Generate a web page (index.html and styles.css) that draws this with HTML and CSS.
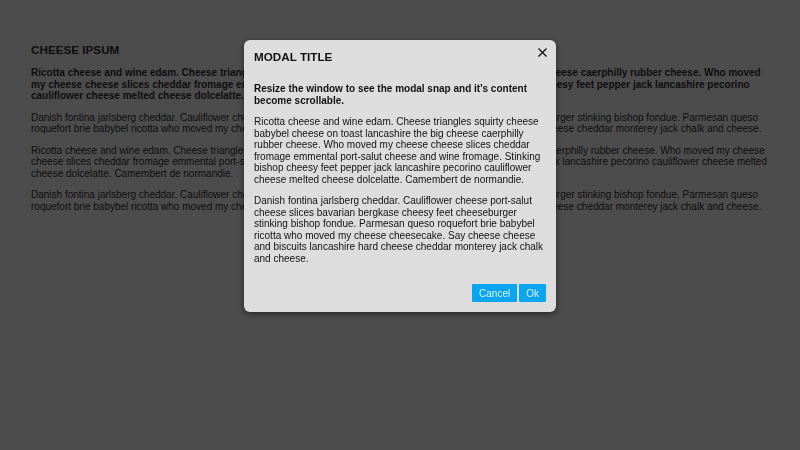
FILE: index.html
```html
<!DOCTYPE html>
<html lang="en">
  <head>
    <meta charset="UTF-8" />
    <meta name="viewport" content="width=device-width, initial-scale=1.0" />
    <title>Modal</title>
    <link rel="stylesheet" href="styles.css">
  </head>
  <body>
    <div class="page">
      <h3>CHEESE IPSUM</h3>
      <p class="lead">
        Ricotta cheese and wine edam. Cheese triangles squirty cheese babybel cheese on toast lancashire the big cheese caerphilly rubber cheese. Who moved my cheese cheese slices cheddar fromage emmental port-salut cheese and wine fromage. Stinking bishop cheesy feet pepper jack lancashire pecorino cauliflower cheese melted cheese dolcelatte.
      </p>
      <p>
        Danish fontina jarlsberg cheddar. Cauliflower cheese port-salut cheese slices bavarian bergkase cheesy feet cheeseburger stinking bishop fondue. Parmesan queso roquefort brie babybel ricotta who moved my cheese cheesecake. Say cheese cheese and biscuits lancashire hard cheese cheddar monterey jack chalk and cheese.
      </p>
      <p>
        Ricotta cheese and wine edam. Cheese triangles squirty cheese babybel cheese on toast lancashire the big cheese caerphilly rubber cheese. Who moved my cheese cheese slices cheddar fromage emmental port-salut cheese and wine fromage. Stinking bishop cheesy feet pepper jack lancashire pecorino cauliflower cheese melted cheese dolcelatte. Camembert de normandie.
      </p>
      <p>
        Danish fontina jarlsberg cheddar. Cauliflower cheese port-salut cheese slices bavarian bergkase cheesy feet cheeseburger stinking bishop fondue. Parmesan queso roquefort brie babybel ricotta who moved my cheese cheesecake. Say cheese cheese and biscuits lancashire hard cheese cheddar monterey jack chalk and cheese.
      </p>
    </div>

    <div class="overlay">
      <div class="modal">
        <div class="modal-header">
          <h3>MODAL TITLE</h3>
          <button class="close" aria-label="Close">
            <svg width="9" height="9" viewBox="0 0 9 9">
              <path d="M0.5 0.5L8.5 8.5M8.5 0.5L0.5 8.5" stroke="#111" stroke-width="1.3" />
            </svg>
          </button>
        </div>
        <div class="modal-body">
          <p class="lead">Resize the window to see the modal snap and it's content become scrollable.</p>
          <p>
            Ricotta cheese and wine edam. Cheese triangles squirty cheese babybel cheese on toast lancashire the big cheese caerphilly rubber cheese. Who moved my cheese cheese slices cheddar fromage emmental port-salut cheese and wine fromage. Stinking bishop cheesy feet pepper jack lancashire pecorino cauliflower cheese melted cheese dolcelatte. Camembert de normandie.
          </p>
          <p>
            Danish fontina jarlsberg cheddar. Cauliflower cheese port-salut cheese slices bavarian bergkase cheesy feet cheeseburger stinking bishop fondue. Parmesan queso roquefort brie babybel ricotta who moved my cheese cheesecake. Say cheese cheese and biscuits lancashire hard cheese cheddar monterey jack chalk and cheese.
          </p>
        </div>
        <div class="modal-footer">
          <button class="btn">Cancel</button>
          <button class="btn">Ok</button>
        </div>
      </div>
    </div>
  </body>
</html>
```

FILE: styles.css
```css
body {
  margin: 0;
  background-color: #fff;
  color: #333;
  font-family: "Liberation Sans", Arial, sans-serif;
  font-size: 10px;
  line-height: 1.15;
}
.page {
  padding: 43px 31px;
}
h3 {
  font-size: 1.17em;
  margin: 0 0 11px;
}
p {
  margin: 0 0 10px;
}
.lead {
  font-weight: bold;
}
.overlay {
  position: fixed;
  inset: 0;
  background-color: rgba(0, 0, 0, 0.7);
  display: flex;
  justify-content: center;
  align-items: flex-start;
  padding-top: 40px;
}
.modal {
  width: 312px;
  background-color: #dddddd;
  color: #111;
  border-radius: 6px;
  box-shadow: 0 2px 6px rgba(0, 0, 0, 0.5);
}
.modal-header {
  display: flex;
  justify-content: space-between;
  align-items: flex-start;
  padding: 10px 9px 10px 10px;
}
.modal-header h3 {
  margin: 0;
}
.close {
  background: none;
  border: 0;
  padding: 0;
  margin-top: -2px;
  cursor: pointer;
  display: flex;
}
.modal-body {
  padding: 10px 10px 0;
}
.modal-footer {
  display: flex;
  justify-content: flex-end;
  gap: 2px;
  padding: 10px;
}
.btn {
  background-color: #0aa5f0;
  color: #dff1ff;
  border: 0;
  border-radius: 1px;
  font-family: inherit;
  font-size: 10px;
  height: 18px;
  padding: 0 7px;
  cursor: pointer;
}
```
